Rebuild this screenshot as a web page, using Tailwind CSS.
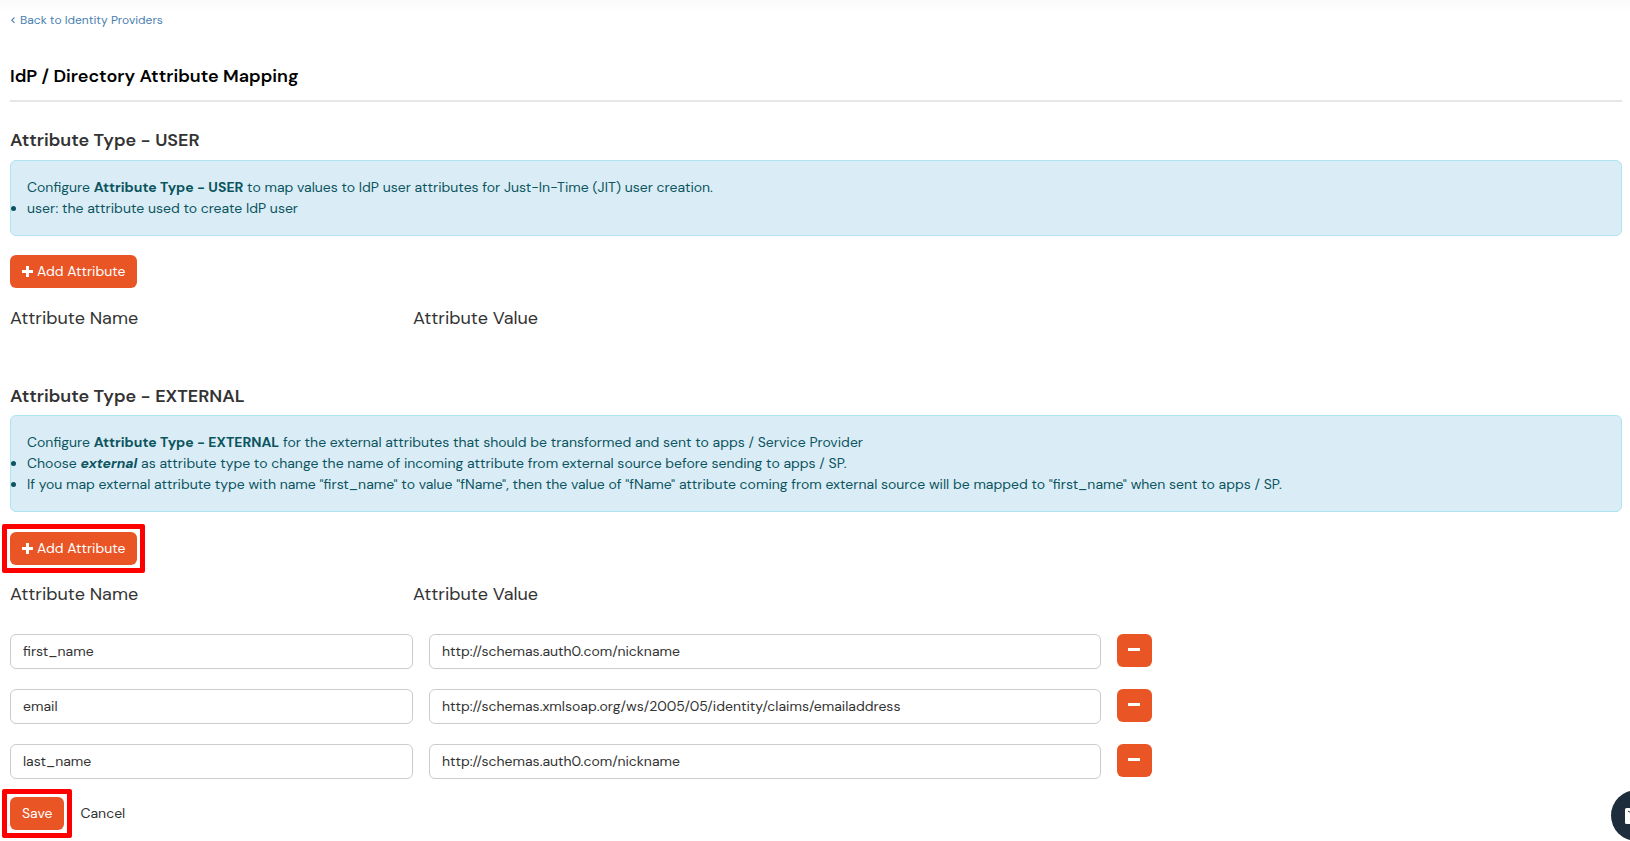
<!DOCTYPE html>
<html lang="en">
<head>
<meta charset="utf-8">
<meta name="viewport" content="width=device-width, initial-scale=1">
<title>IdP / Directory Attribute Mapping</title>
<script src="https://cdn.jsdelivr.net/npm/@tailwindcss/browser@4"></script>
</head>
<body class="min-h-screen overflow-x-hidden bg-white font-['DM_Sans','Inter',sans-serif] text-sm leading-[21px] text-[#333333]">
<main class="bg-linear-to-b from-[#fafafa] to-white to-[12px] pt-2.5 pr-2 pl-2.5">
  <a href="#" class="flex w-fit items-center gap-1 text-xs leading-5 text-[#4a80b0]"><svg class="h-2 w-1.5" viewBox="0 0 6 8" fill="none" stroke="currentColor" stroke-width="1.1" aria-hidden="true"><path d="M4.500 1.500L1.800 4.200l2.700 2.700"/></svg>Back to Identity Providers</a>
  <h1 class="mt-8 border-b-2 border-[#e6e7e8] pb-2.5 text-lg leading-7 font-semibold text-black">IdP / Directory Attribute Mapping</h1>

  <section>
    <h2 class="mt-6 text-lg leading-7 font-semibold">Attribute Type - USER</h2>
    <div class="mt-1.5 rounded-md border border-[#aee4f2] bg-[#daedf6] p-4 text-[#0c5460]">
      <p>Configure <strong>Attribute Type - USER</strong> to map values to IdP user attributes for Just-In-Time (JIT) user creation.</p>
      <ul class="list-disc">
        <li>user: the attribute used to create IdP user</li>
      </ul>
    </div>
    <button type="button" class="mt-[19px] flex h-[33px] items-center gap-[3px] rounded-md bg-[#e95525] px-3 text-white">
      <svg class="size-3" viewBox="0 0 12 12" fill="currentColor" aria-hidden="true"><path d="M4 0h3v4h4v3h-4v4h-3v-4h-4v-3h4z"/></svg>Add Attribute
    </button>
    <div class="mt-4 flex text-lg leading-7">
      <h3 class="w-1/4">Attribute Name</h3>
      <h3>Attribute Value</h3>
    </div>
  </section>

  <section>
    <h2 class="mt-[50px] text-lg leading-7 font-semibold">Attribute Type - EXTERNAL</h2>
    <div class="mt-[5px] rounded-md border border-[#aee4f2] bg-[#daedf6] p-4 text-[#0c5460]">
      <p>Configure <strong>Attribute Type - EXTERNAL</strong> for the external attributes that should be transformed and sent to apps / Service Provider</p>
      <ul class="list-disc">
        <li>Choose <strong><em>external</em></strong> as attribute type to change the name of incoming attribute from external source before sending to apps / SP.</li>
        <li>If you map external attribute type with name "first_name" to value "fName", then the value of "fName" attribute coming from external source will be mapped to "first_name" when sent to apps / SP.</li>
      </ul>
    </div>
    <button type="button" class="relative mt-5 flex h-[33px] items-center gap-[3px] rounded-md bg-[#e95525] px-3 text-white">
      <svg class="size-3" viewBox="0 0 12 12" fill="currentColor" aria-hidden="true"><path d="M4 0h3v4h4v3h-4v4h-3v-4h-4v-3h4z"/></svg>Add Attribute
      <span class="absolute -inset-2 rounded-xs border-5 border-[#ff0000]"></span>
    </button>
    <div class="mt-[15px] flex text-lg leading-7">
      <h3 class="w-1/4">Attribute Name</h3>
      <h3>Attribute Value</h3>
    </div>
    <div class="mt-[26px] flex flex-col gap-5">
      <div class="flex gap-4">
        <input type="text" aria-label="Attribute Name 1" value="first_name" class="h-[35px] w-1/4 rounded-md border border-[#cccccc] bg-white px-3 pb-0.5">
        <input type="text" aria-label="Attribute Value 1" value="http://schemas.auth0.com/nickname" class="h-[35px] w-5/12 rounded-md border border-[#cccccc] bg-white px-3 pb-0.5">
        <button type="button" aria-label="Remove attribute 1" class="flex h-[33px] w-[35px] items-center justify-center rounded-md bg-[#e95525] pb-0.5"><span class="h-[3px] w-3 bg-white"></span></button>
      </div>
      <div class="flex gap-4">
        <input type="text" aria-label="Attribute Name 2" value="email" class="h-[35px] w-1/4 rounded-md border border-[#cccccc] bg-white px-3 pb-0.5">
        <input type="text" aria-label="Attribute Value 2" value="http://schemas.xmlsoap.org/ws/2005/05/identity/claims/emailaddress" class="h-[35px] w-5/12 rounded-md border border-[#cccccc] bg-white px-3 pb-0.5">
        <button type="button" aria-label="Remove attribute 2" class="flex h-[33px] w-[35px] items-center justify-center rounded-md bg-[#e95525] pb-0.5"><span class="h-[3px] w-3 bg-white"></span></button>
      </div>
      <div class="flex gap-4">
        <input type="text" aria-label="Attribute Name 3" value="last_name" class="h-[35px] w-1/4 rounded-md border border-[#cccccc] bg-white px-3 pb-0.5">
        <input type="text" aria-label="Attribute Value 3" value="http://schemas.auth0.com/nickname" class="h-[35px] w-5/12 rounded-md border border-[#cccccc] bg-white px-3 pb-0.5">
        <button type="button" aria-label="Remove attribute 3" class="flex h-[33px] w-[35px] items-center justify-center rounded-md bg-[#e95525] pb-0.5"><span class="h-[3px] w-3 bg-white"></span></button>
      </div>
    </div>
  </section>

  <div class="mt-[18px] flex items-center gap-4">
    <button type="submit" class="relative h-[33px] rounded-md bg-[#e95525] px-3 text-white">Save<span class="absolute -inset-2 rounded-xs border-5 border-[#ff0000]"></span></button>
    <a href="#">Cancel</a>
  </div>
</main>

<button type="button" aria-label="Contact us" class="fixed -right-8 bottom-0 flex size-[51px] items-center rounded-full bg-[#1d2d3b] pl-3.5">
  <svg class="h-4 w-[22px]" viewBox="0 0 22 16" aria-hidden="true"><rect width="22" height="16" rx="1.5" fill="#fff"/><path d="M3 3l8 5 8-5" fill="none" stroke="#1d2d3b"/></svg>
</button>
</body>
</html>
